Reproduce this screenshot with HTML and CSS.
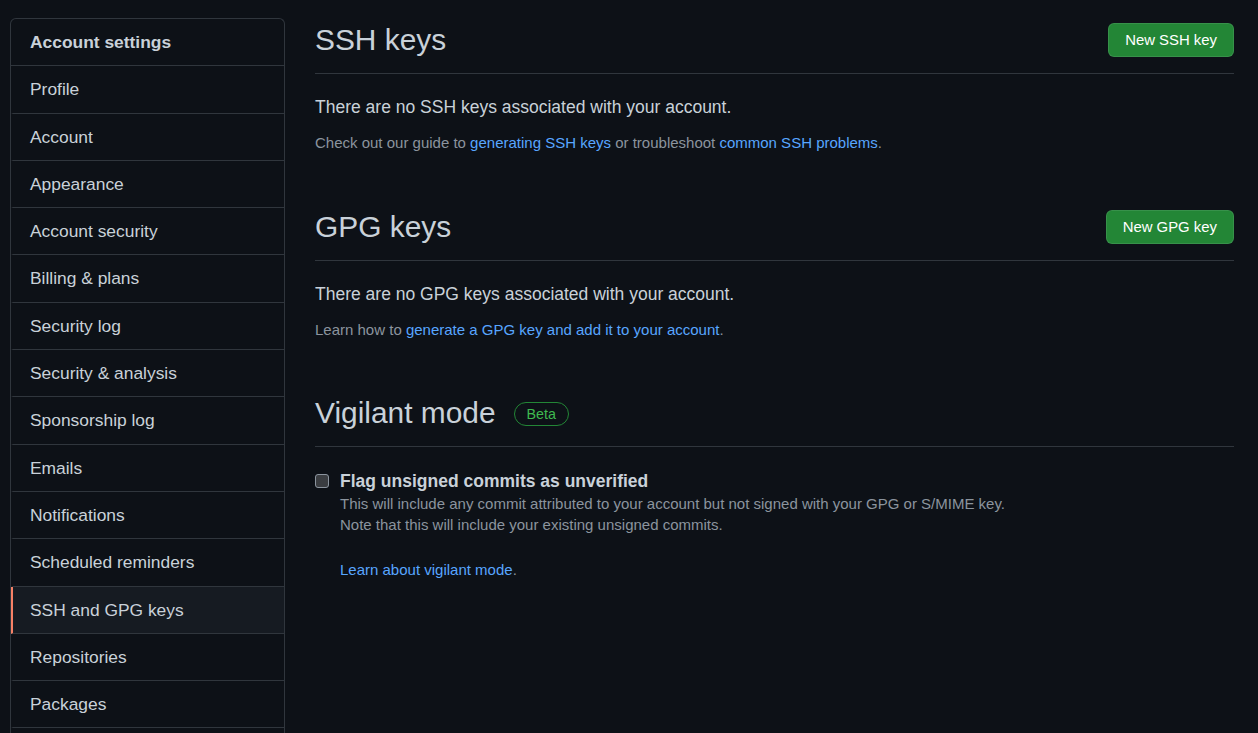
FILE: index.html
```html
<!DOCTYPE html>
<html lang="en">
<head>
<meta charset="utf-8">
<title>SSH and GPG keys</title>
<link rel="stylesheet" href="styles.css">
</head>
<body>
<div class="layout">
  <nav class="menu">
    <div class="menu-heading">Account settings</div>
    <a class="menu-item" href="#">Profile</a>
    <a class="menu-item" href="#">Account</a>
    <a class="menu-item" href="#">Appearance</a>
    <a class="menu-item" href="#">Account security</a>
    <a class="menu-item" href="#">Billing &amp; plans</a>
    <a class="menu-item" href="#">Security log</a>
    <a class="menu-item" href="#">Security &amp; analysis</a>
    <a class="menu-item" href="#">Sponsorship log</a>
    <a class="menu-item" href="#">Emails</a>
    <a class="menu-item" href="#">Notifications</a>
    <a class="menu-item" href="#">Scheduled reminders</a>
    <a class="menu-item selected" href="#">SSH and GPG keys</a>
    <a class="menu-item" href="#">Repositories</a>
    <a class="menu-item" href="#">Packages</a>
  </nav>
  <main class="main">
    <section class="section">
      <div class="subhead">
        <h2 class="subhead-heading">SSH keys</h2>
        <a class="btn" href="#">New SSH key</a>
      </div>
      <p class="blank">There are no SSH keys associated with your account.</p>
      <p class="note">Check out our guide to <a href="#">generating SSH keys</a> or troubleshoot <a href="#">common SSH problems</a>.</p>
    </section>
    <section class="section">
      <div class="subhead">
        <h2 class="subhead-heading">GPG keys</h2>
        <a class="btn" href="#">New GPG key</a>
      </div>
      <p class="blank">There are no GPG keys associated with your account.</p>
      <p class="note">Learn how to <a href="#">generate a GPG key and add it to your account</a>.</p>
    </section>
    <section class="section">
      <div class="subhead">
        <h2 class="subhead-heading">Vigilant mode <span class="label">Beta</span></h2>
      </div>
      <div class="form-checkbox">
        <span class="checkbox"></span>
        <div class="checkbox-body">
          <div class="checkbox-label">Flag unsigned commits as unverified</div>
          <p class="checkbox-note">This will include any commit attributed to your account but not signed with your GPG or S/MIME key.<br>Note that this will include your existing unsigned commits.</p>
          <p class="checkbox-link"><a href="#">Learn about vigilant mode</a>.</p>
        </div>
      </div>
    </section>
  </main>
</div>
</body>
</html>
```
FILE: styles.css
```css
* { box-sizing: border-box; }
html, body {
  margin: 0;
  background: #0d1117;
  color: #c9d1d9;
  font-family: "Liberation Sans", Arial, sans-serif;
}
a { color: #58a6ff; text-decoration: none; }
.layout {
  display: flex;
  gap: 30px;
  padding: 18px 24px 0 10px;
  height: 733px;
  overflow: hidden;
}
.menu {
  width: 275px;
  flex: none;
  border: 1px solid #30363d;
  border-bottom: none;
  border-radius: 6px 6px 0 0;
  align-self: flex-start;
  display: flex;
  flex-direction: column;
  padding-bottom: 30px;
}
.menu-heading {
  padding: 12px 19px 11px;
  font-size: 17.4px;
  line-height: 23.3px;
  font-weight: bold;
  color: #c9d1d9;
  border-bottom: 1px solid #30363d;
}
.menu-item {
  padding: 12px 19px 12px 17px;
  font-size: 17.4px;
  line-height: 22.3px;
  color: #c9d1d9;
  border-bottom: 1px solid #30363d;
  border-left: 2px solid transparent;
}
.menu-item.selected {
  background: #161b22;
  border-left-color: #f78166;
}
.main {
  flex: 1;
  padding-top: 5px;
}
.section + .section { margin-top: 55.5px; }
.subhead {
  display: flex;
  align-items: center;
  justify-content: space-between;
  min-height: 50px;
  padding-bottom: 16px;
  border-bottom: 1px solid #30363d;
}
.subhead-heading {
  margin: 0;
  font-size: 29.9px;
  line-height: 34px;
  font-weight: normal;
  color: #c9d1d9;
  display: flex;
  align-items: center;
}
.label {
  display: inline-block;
  margin-left: 18px;
  margin-top: 2px;
  padding: 0 12px;
  font-size: 14.3px;
  line-height: 22px;
  color: #3fb950;
  border: 1px solid #238636;
  border-radius: 12px;
}
.btn {
  display: inline-block;
  height: 34px;
  line-height: 32px;
  font-size: 14.9px;
  color: #ffffff;
  background: #238636;
  border: 1px solid rgba(240,246,252,0.1);
  border-radius: 6px;
  padding: 0 16px;
}
.blank {
  margin: 21px 0 0;
  font-size: 17.5px;
  line-height: 25px;
}
.note {
  margin: 12px 0 0;
  font-size: 15px;
  line-height: 22px;
  color: #8b949e;
}
.form-checkbox {
  display: flex;
  margin-top: 22px;
}
.checkbox {
  width: 14px;
  height: 14px;
  flex: none;
  margin-top: 5px;
  margin-right: 11px;
  background: #3a3d41;
  border: 1px solid #8b949e;
  border-radius: 3px;
}
.checkbox-label {
  font-size: 17.5px;
  line-height: 24px;
  font-weight: bold;
}
.checkbox-note {
  margin: 0;
  font-size: 15px;
  line-height: 21px;
  color: #8b949e;
}
.checkbox-link {
  margin: 24px 0 0;
  font-size: 15px;
  line-height: 21px;
  color: #8b949e;
}
```
